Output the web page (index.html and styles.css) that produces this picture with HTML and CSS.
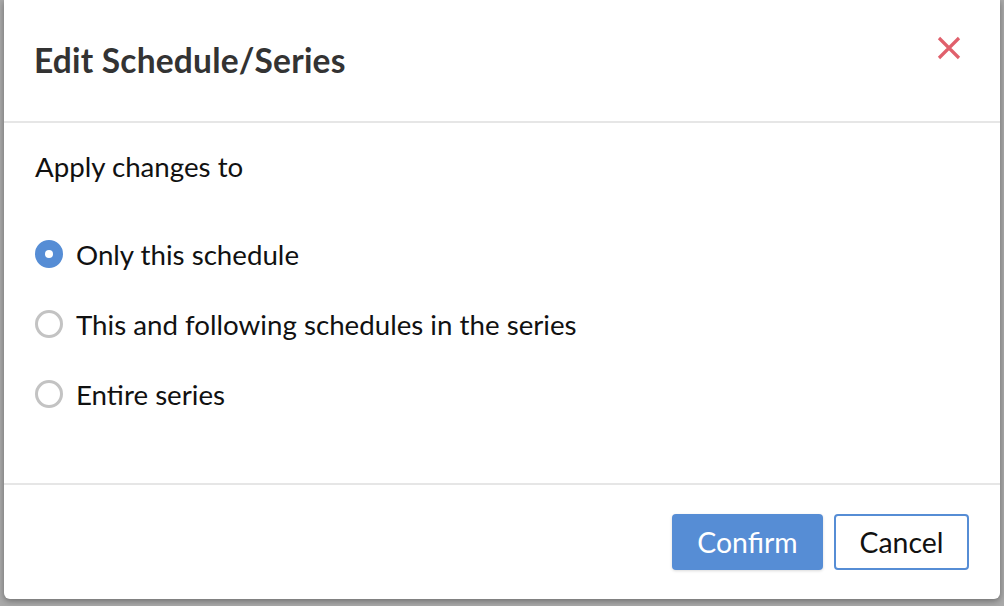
FILE: index.html
```html
<!DOCTYPE html>
<html>
<head>
<meta charset="utf-8">
<link rel="stylesheet" href="styles.css">
</head>
<body>
<div class="modal">
  <div class="modal-header">
    <h1 class="title">Edit Schedule/Series</h1>
    <button class="close" aria-label="Close">
      <svg width="24" height="24" viewBox="0 0 24 24"><path d="M2 2 L22 22 M22 2 L2 22" stroke="#e0606c" stroke-width="3.2" fill="none"/></svg>
    </button>
  </div>
  <div class="modal-body">
    <div class="label">Apply changes to</div>
    <div class="options">
      <label class="option"><span class="radio checked"></span><span>Only this schedule</span></label>
      <label class="option"><span class="radio"></span><span>This and following schedules in the series</span></label>
      <label class="option"><span class="radio"></span><span>Entire series</span></label>
    </div>
  </div>
  <div class="modal-footer">
    <button class="btn btn-primary">Confirm</button>
    <button class="btn btn-secondary">Cancel</button>
  </div>
</div>
</body>
</html>
```

FILE: styles.css
```css
html, body {
  margin: 0;
  padding: 0;
  height: 100%;
}
body {
  background: #a9a9a9;
  font-family: Lato, "Noto Sans", sans-serif;
  overflow: hidden;
}
.modal {
  margin-left: 4px;
  width: 996px;
  height: 599px;
  background: #fff;
  border-radius: 0 0 6px 6px;
  box-shadow: 0 2px 6px rgba(0,0,0,0.35);
  display: flex;
  flex-direction: column;
}
.modal-header {
  height: 123px;
  box-sizing: border-box;
  border-bottom: 2px solid #e6e6e6;
  display: flex;
  align-items: center;
  justify-content: space-between;
  padding: 0 39px 0 30px;
  flex-shrink: 0;
}
.title {
  margin: 0;
  font-size: 33.5px;
  font-weight: 700;
  color: #333;
  letter-spacing: 0.2px;
  margin-top: -1px;
}
.close {
  align-self: flex-start;
  margin-top: 36px;
  background: none;
  border: none;
  padding: 0;
  width: 24px;
  height: 24px;
  cursor: pointer;
}
.close svg { display: block; }
.modal-body {
  flex: 1;
  padding: 29px 31px 0;
  box-sizing: border-box;
}
.label {
  font-size: 27.7px;
  line-height: 30px;
  color: #111;
}
.options {
  margin-top: 37px;
  display: flex;
  flex-direction: column;
}
.option {
  height: 70px;
  display: flex;
  align-items: center;
  font-size: 27.7px;
  color: #111;
  gap: 13px;
}
.radio {
  width: 28px;
  height: 28px;
  box-sizing: border-box;
  border-radius: 50%;
  border: 3px solid #c3c3c3;
  background: #fff;
  display: flex;
  align-items: center;
  justify-content: center;
  flex-shrink: 0;
}
.radio.checked {
  border-color: #568dd5;
  background: #568dd5;
}
.radio.checked::after {
  content: "";
  width: 8px;
  height: 8px;
  border-radius: 50%;
  background: #fff;
}
.modal-footer {
  height: 116px;
  box-sizing: border-box;
  border-top: 2px solid #e6e6e6;
  display: flex;
  justify-content: flex-end;
  align-items: flex-start;
  gap: 11px;
  padding: 29px 31px 0 0;
  flex-shrink: 0;
}
.btn {
  height: 56px;
  border-radius: 4px;
  font-family: Lato, "Noto Sans", sans-serif;
  font-size: 28.4px;
  cursor: pointer;
  box-sizing: border-box;
  padding: 0;
}
.btn-primary {
  width: 151px;
  background: #568dd5;
  border: none;
  color: #fff;
  box-shadow: 0 1px 3px rgba(0,0,0,0.15);
}
.btn-secondary {
  width: 135px;
  background: #fff;
  border: 2px solid #568dd5;
  color: #111;
}
```
